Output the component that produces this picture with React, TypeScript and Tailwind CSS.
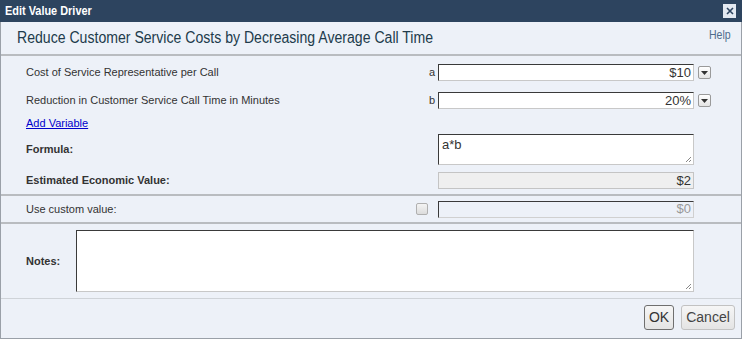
import React from 'react';

const sans = { fontFamily: '"Liberation Sans", Arial, sans-serif' };

const DropButton: React.FC = () => (
  <button className="ml-[4px] flex h-[13px] w-[13px] items-center justify-center rounded-[2px] border border-[#9a9a9a] bg-gradient-to-b from-white to-[#e4e4e4]">
    <svg width="7" height="4" viewBox="0 0 7 4">
      <path d="M0 0 H7 L3.5 4 Z" fill="#333" />
    </svg>
  </button>
);

const inset = 'border-t border-l border-t-[#3a3a3a] border-l-[#3a3a3a] border-b border-r border-b-[#c8c8c8] border-r-[#c8c8c8]';

const Grip: React.FC = () => (
  <svg className="absolute bottom-[1px] right-[1px]" width="7" height="7" viewBox="0 0 7 7">
    <path d="M6 1 L1 6 M6 4 L4 6" stroke="#888" strokeWidth="1" />
  </svg>
);

export default function App() {
  return (
    <div className="h-[339px] w-[742px] overflow-hidden bg-[#edf1f8] text-[11px] text-[#333]" style={sans}>
      <div className="flex h-full flex-col border-x border-b border-[#9aa0a8]">
        {/* title bar */}
        <div className="-mx-px flex h-[22px] shrink-0 items-center justify-between bg-[#2d445f] pl-[5px] pr-[6px]">
          <span className="origin-left scale-x-[0.84] whitespace-nowrap text-[13px] font-bold text-white">Edit Value Driver</span>
          <span className="flex h-[14px] w-[13px] items-center justify-center bg-[#e3e9f1]">
            <svg width="8" height="8" viewBox="0 0 8 8">
              <path d="M1 1 L7 7 M7 1 L1 7" stroke="#2d445f" strokeWidth="1.6" />
            </svg>
          </span>
        </div>

        {/* header */}
        <div className="flex h-[34px] shrink-0 items-center justify-between border-b-2 border-[#b9bcc0] pl-[16px] pr-[10px]">
          <span className="origin-left scale-x-[0.88] whitespace-nowrap text-[16px] text-[#213b4b]">Reduce Customer Service Costs by Decreasing Average Call Time</span>
          <span className="-mt-[6px] origin-right scale-x-[0.88] text-[12px] text-[#4f6d8c]">Help</span>
        </div>

        {/* variables */}
        <div className="flex shrink-0 flex-col border-b-2 border-[#b9bcc0] pl-[25px] pr-[30px] pt-[8px] pb-[5px]">
          <div className="flex h-[17px] items-center">
            <span>Cost of Service Representative per Call</span>
            <span className="ml-auto mr-[3px]">a</span>
            <div className={`flex h-[17px] w-[256px] items-center justify-end bg-white pr-[2px] text-[13px] ${inset}`}>$10</div>
            <DropButton />
          </div>
          <div className="mt-[11px] flex h-[17px] items-center">
            <span>Reduction in Customer Service Call Time in Minutes</span>
            <span className="ml-auto mr-[3px]">b</span>
            <div className={`flex h-[17px] w-[256px] items-center justify-end bg-white pr-[2px] text-[13px] ${inset}`}>20%</div>
            <DropButton />
          </div>
          <div className="mt-[8px] flex h-[12px] items-center">
            <a href="#" className="text-[#0000cc] underline">Add Variable</a>
          </div>
          <div className="mt-[5px] flex h-[31px] items-center">
            <span className="font-bold">Formula:</span>
            <div className={`relative ml-auto mr-[17px] h-[31px] w-[256px] bg-white px-[3px] pt-[2px] text-[13px] leading-[15px] ${inset}`}>
              a*b
              <Grip />
            </div>
          </div>
          <div className="mt-[7px] flex h-[17px] items-center">
            <span className="font-bold">Estimated Economic Value:</span>
            <div className="ml-auto mr-[17px] flex h-[17px] w-[256px] items-center justify-end border border-[#c4c4c4] bg-[#efefef] pr-[2px] text-[13px]">$2</div>
          </div>
        </div>

        {/* custom value */}
        <div className="flex h-[28px] shrink-0 items-center border-b-2 border-[#b9bcc0] pl-[25px] pr-[30px]">
          <span>Use custom value:</span>
          <span className="ml-auto mr-[10px] h-[12px] w-[12px] rounded-[2px] border border-[#b0b0b0] bg-gradient-to-b from-[#f4f4f4] to-[#dcdcdc]" />
          <div className={`mr-[17px] flex h-[17px] w-[256px] items-center justify-end pr-[2px] text-[13px] text-[#999] ${inset} border-r-[#d0d0d0] border-b-[#d0d0d0]`}>$0</div>
        </div>

        {/* notes */}
        <div className="flex h-[75px] shrink-0 items-center border-b border-[#cfd3d8] pl-[25px] pr-[47px]">
          <span className="w-[50px] font-bold">Notes:</span>
          <div className={`relative h-[62px] flex-1 bg-white ${inset}`}>
            <Grip />
          </div>
        </div>

        {/* footer */}
        <div className="flex flex-1 items-start justify-end gap-[7px] pr-[6px] pt-[6px]">
          <button className="h-[25px] w-[30px] rounded-[3px] border border-[#6f6f6f] bg-gradient-to-b from-[#f6f6f6] to-[#e4e4e4] text-[14px] text-[#333]">OK</button>
          <button className="h-[25px] w-[54px] rounded-[3px] border border-[#c2c2c2] bg-gradient-to-b from-[#f6f6f6] to-[#e4e4e4] text-[14px] text-[#444]">Cancel</button>
        </div>
      </div>
    </div>
  );
}
